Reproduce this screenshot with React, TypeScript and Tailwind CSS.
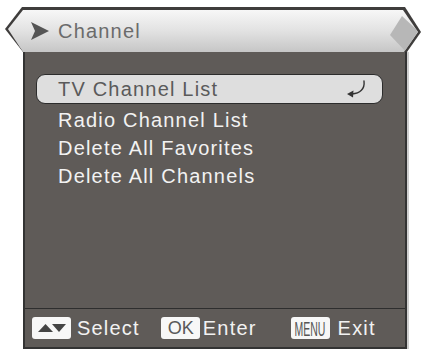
import React from 'react';

const font = { fontFamily: '"Liberation Sans", Arial, sans-serif' };

const items = ['TV Channel List', 'Radio Channel List', 'Delete All Favorites', 'Delete All Channels'];

const EnterIcon = () => (
  <svg width="22" height="18" viewBox="0 0 22 18">
    <path d="M19 1 C20 9 15 13.5 7 14" fill="none" stroke="#333" strokeWidth="1.4" strokeLinecap="round" />
    <polygon points="2,14 8.5,10.5 8,17.5" fill="#333" />
  </svg>
);

const Header = () => (
  <div className="ml-[5px] mt-[7px] w-[416px] h-[45px] bg-[#3f3d3c] px-[3px] pt-[3px] [clip-path:polygon(17px_0,400px_0,416px_25px,402px_45px,18px_45px,0_22px)]">
    <div className="h-full flex items-center bg-gradient-to-b from-[#f7f7f7] via-[#e2e2e2] to-[#c6c6c6] [clip-path:polygon(15px_0,395px_0,410px_22px,396px_42px,15px_42px,0_19px)]">
      <svg width="18" height="18" viewBox="0 0 18 18" className="ml-[23px]">
        <path d="M0 0 L18 9 L0 18 L4 9 Z" fill="#555" />
      </svg>
      <span className="ml-[9px] text-[20px] tracking-[1.2px] text-[#6b6b6b]" style={font}>Channel</span>
      <div className="flex-1" />
      <div className="w-[28px] h-full bg-[#b7b7b7] [clip-path:polygon(12px_6px,28px_21px,16px_42px,0_25px)]" />
    </div>
  </div>
);

const Key = ({ children }: { children: React.ReactNode }) => (
  <div className="w-[39px] h-[22px] rounded-[3px] bg-[#f7f7f7] flex items-center justify-center overflow-hidden">
    {children}
  </div>
);

export default function App() {
  return (
    <div className="w-[421px] h-[351px] bg-white overflow-hidden" style={font}>
      <Header />
      <div className="ml-[23px] w-[384px] h-[297px] flex flex-col bg-[#5f5b58] border-x-2 border-b-2 border-[#333] shadow-[2px_0_0_#cfcfcf]">
        <div className="flex-1 flex flex-col pt-[22px] pl-[11px] pr-[22px]">
          <div className="h-[30px] mb-[2px] rounded-[9px] border border-[#2c2c2c] bg-[#dedede] flex items-center justify-between pl-[21px] pr-[15px]">
            <span className="text-[20px] tracking-[1.2px] text-[#5a5a5a]">{items[0]}</span>
            <EnterIcon />
          </div>
          {items.slice(1).map((t) => (
            <div key={t} className="h-[28px] flex items-center pl-[22px] text-[20px] tracking-[1.2px] text-[#f2f2f2]">
              {t}
            </div>
          ))}
        </div>
        <div className="h-[39px] border-t border-[#2e2e2e] flex items-center pl-[7px] text-[20px] tracking-[1.2px] text-[#f2f2f2]">
          <Key>
            <svg width="30" height="10" viewBox="0 0 30 10">
              <polygon points="1,9 8.5,1 16,9" fill="#444" />
              <polygon points="15,1 29,1 22,9" fill="#444" />
            </svg>
          </Key>
          <span className="ml-[6px]">Select</span>
          <div className="ml-[21px]">
            <Key>
              <span className="text-[19px] tracking-normal text-[#5a5a5a] scale-x-95 inline-block">OK</span>
            </Key>
          </div>
          <span className="ml-[3px]">Enter</span>
          <div className="ml-[34px]">
            <Key>
              <span className="text-[21px] tracking-normal text-[#555] scale-x-[0.5] inline-block leading-none">MENU</span>
            </Key>
          </div>
          <span className="ml-[8px]">Exit</span>
        </div>
      </div>
    </div>
  );
}
